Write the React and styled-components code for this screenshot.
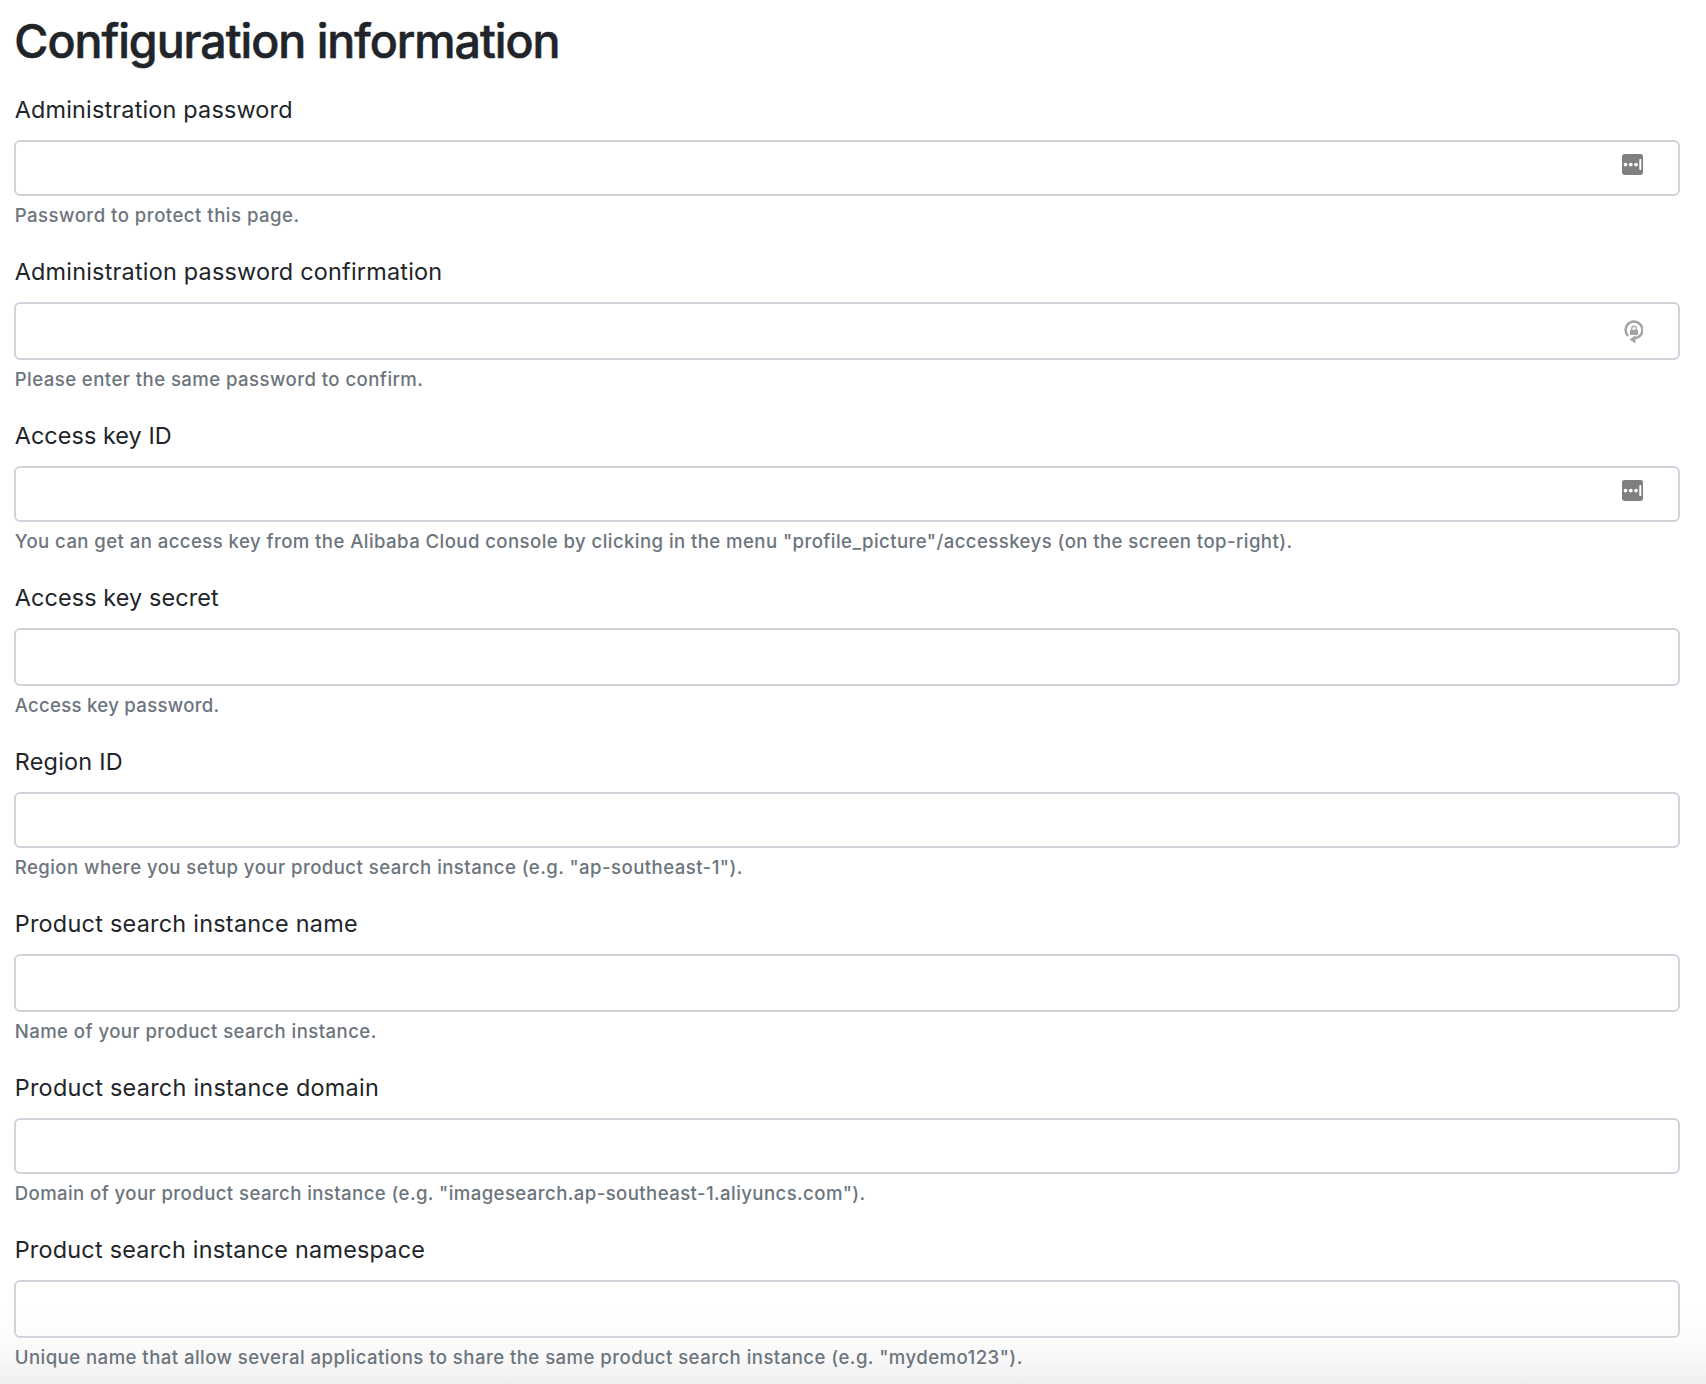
import React from "react";
import styled, { createGlobalStyle } from "styled-components";

const GlobalStyle = createGlobalStyle`
  *, *::before, *::after { box-sizing: border-box; }
  body {
    margin: 0;
    background: #fff;
    color: #212529;
    font-family: Inter, "Liberation Sans", sans-serif;
  }
`;

const Page = styled.main`
  height: 1384px;
  padding: 12px 26px 0 14px;
  overflow: hidden;
  background: linear-gradient(to bottom, #fff 1304px, #fdfdfd 1330px, #f8f8f8 1358px, #efefef 1384px);
`;

const Title = styled.h1`
  margin: 0 0 22px;
  padding-left: 0.3px;
  font-size: 46.5px;
  font-weight: 500;
  line-height: 58px;
  letter-spacing: -1.02px;
  -webkit-text-stroke: 0.6px currentColor;
`;

const Form = styled.form`
  display: flex;
  flex-direction: column;
  gap: 25px;
`;

const Group = styled.div`
  display: flex;
  flex-direction: column;
`;

const Label = styled.label`
  margin-bottom: 12px;
  padding-left: 0.7px;
  font-size: 23.4px;
  line-height: 36px;
  letter-spacing: ${(p) => p.$tracking}px;
  white-space: nowrap;
`;

const Control = styled.div`
  display: flex;
  align-items: flex-start;
  height: ${(p) => (p.$tall ? 58 : 56)}px;
  padding-right: 35px;
  border: 2px solid #ced4da;
  border-radius: 6px;
  background: ${(p) => (p.$tinted ? "transparent" : "#fff")};
`;

const Input = styled.input`
  flex: 1;
  align-self: stretch;
  min-width: 0;
  padding: 0 18px;
  border: 0;
  outline: 0;
  background: transparent;
  color: #495057;
  font: inherit;
  font-size: 23.4px;
`;

const Help = styled.small`
  margin-top: 5px;
  padding-left: 0.7px;
  color: #6c757d;
  font-size: 18.6px;
  font-weight: 500;
  line-height: 28px;
  letter-spacing: ${(p) => p.$tracking}px;
  white-space: nowrap;
`;

const Glyph = styled.svg`
  flex: none;
  display: block;
  margin-top: ${(p) => p.$top}px;
`;

function FillIcon() {
  return (
    <Glyph $top={12} width="21" height="21" viewBox="0 0 21 21" aria-hidden="true">
      <rect width="21" height="21" rx="2.4" fill="#7f7f7f" />
      <circle cx="3.5" cy="10.6" r="1.85" fill="#fff" />
      <circle cx="8.8" cy="10.6" r="1.85" fill="#fff" />
      <circle cx="14" cy="10.6" r="1.85" fill="#fff" />
      <rect x="17.3" y="5" width="2" height="11" rx="0.8" fill="#fff" />
    </Glyph>
  );
}

function GenerateIcon() {
  return (
    <Glyph $top={13} width="21" height="28" viewBox="0 0 21 28" aria-hidden="true">
      <path d="M6.06 18.84A8.4 8.4 0 1 1 12.6 21.3" fill="none" stroke="#a3a3a3" strokeWidth="2.5" />
      <path d="M7.6 22.4L13.4 18.2V26.6Z" fill="#a3a3a3" />
      <rect x="8" y="12.8" width="8" height="5.2" rx="0.6" fill="#a3a3a3" />
      <path d="M9.8 13.2V11.4a2.2 2.2 0 0 1 4.4 0v1.8" fill="none" stroke="#a3a3a3" strokeWidth="1.3" />
    </Glyph>
  );
}

const icons = { fill: FillIcon, generate: GenerateIcon };

const fields = [
  { id: "password", label: "Administration password", labelTracking: 0.19, help: "Password to protect this page.", helpTracking: 0.48, icon: "fill", type: "password" },
  { id: "confirmation", label: "Administration password confirmation", labelTracking: 0.22, help: "Please enter the same password to confirm.", helpTracking: 0.43, icon: "generate", type: "password" },
  { id: "key-id", label: "Access key ID", labelTracking: 0.07, help: 'You can get an access key from the Alibaba Cloud console by clicking in the menu "profile_picture"/accesskeys (on the screen top-right).', helpTracking: 0.418, icon: "fill" },
  { id: "key-secret", label: "Access key secret", labelTracking: 0.12, help: "Access key password.", helpTracking: 0.28, type: "password" },
  { id: "region", label: "Region ID", labelTracking: 0.25, help: 'Region where you setup your product search instance (e.g. "ap-southeast-1").', helpTracking: 0.436 },
  { id: "name", label: "Product search instance name", labelTracking: 0.26, help: "Name of your product search instance.", helpTracking: 0.43 },
  { id: "domain", label: "Product search instance domain", labelTracking: 0.27, help: 'Domain of your product search instance (e.g. "imagesearch.ap-southeast-1.aliyuncs.com").', helpTracking: 0.405 },
  { id: "namespace", label: "Product search instance namespace", labelTracking: 0.23, help: 'Unique name that allow several applications to share the same product search instance (e.g. "mydemo123").', helpTracking: 0.445 },
];

export default function App() {
  return (
    <>
      <GlobalStyle />
      <Page>
        <Title>Configuration information</Title>
        <Form>
          {fields.map((f, i) => {
            const Icon = icons[f.icon];
            return (
              <Group key={f.id}>
                <Label htmlFor={f.id} $tracking={f.labelTracking}>{f.label}</Label>
                <Control $tall={i % 2 === 1} $tinted={i === fields.length - 1}>
                  <Input id={f.id} type={f.type || "text"} autoComplete="off" />
                  {Icon && <Icon />}
                </Control>
                <Help $tracking={f.helpTracking}>{f.help}</Help>
              </Group>
            );
          })}
        </Form>
      </Page>
    </>
  );
}
